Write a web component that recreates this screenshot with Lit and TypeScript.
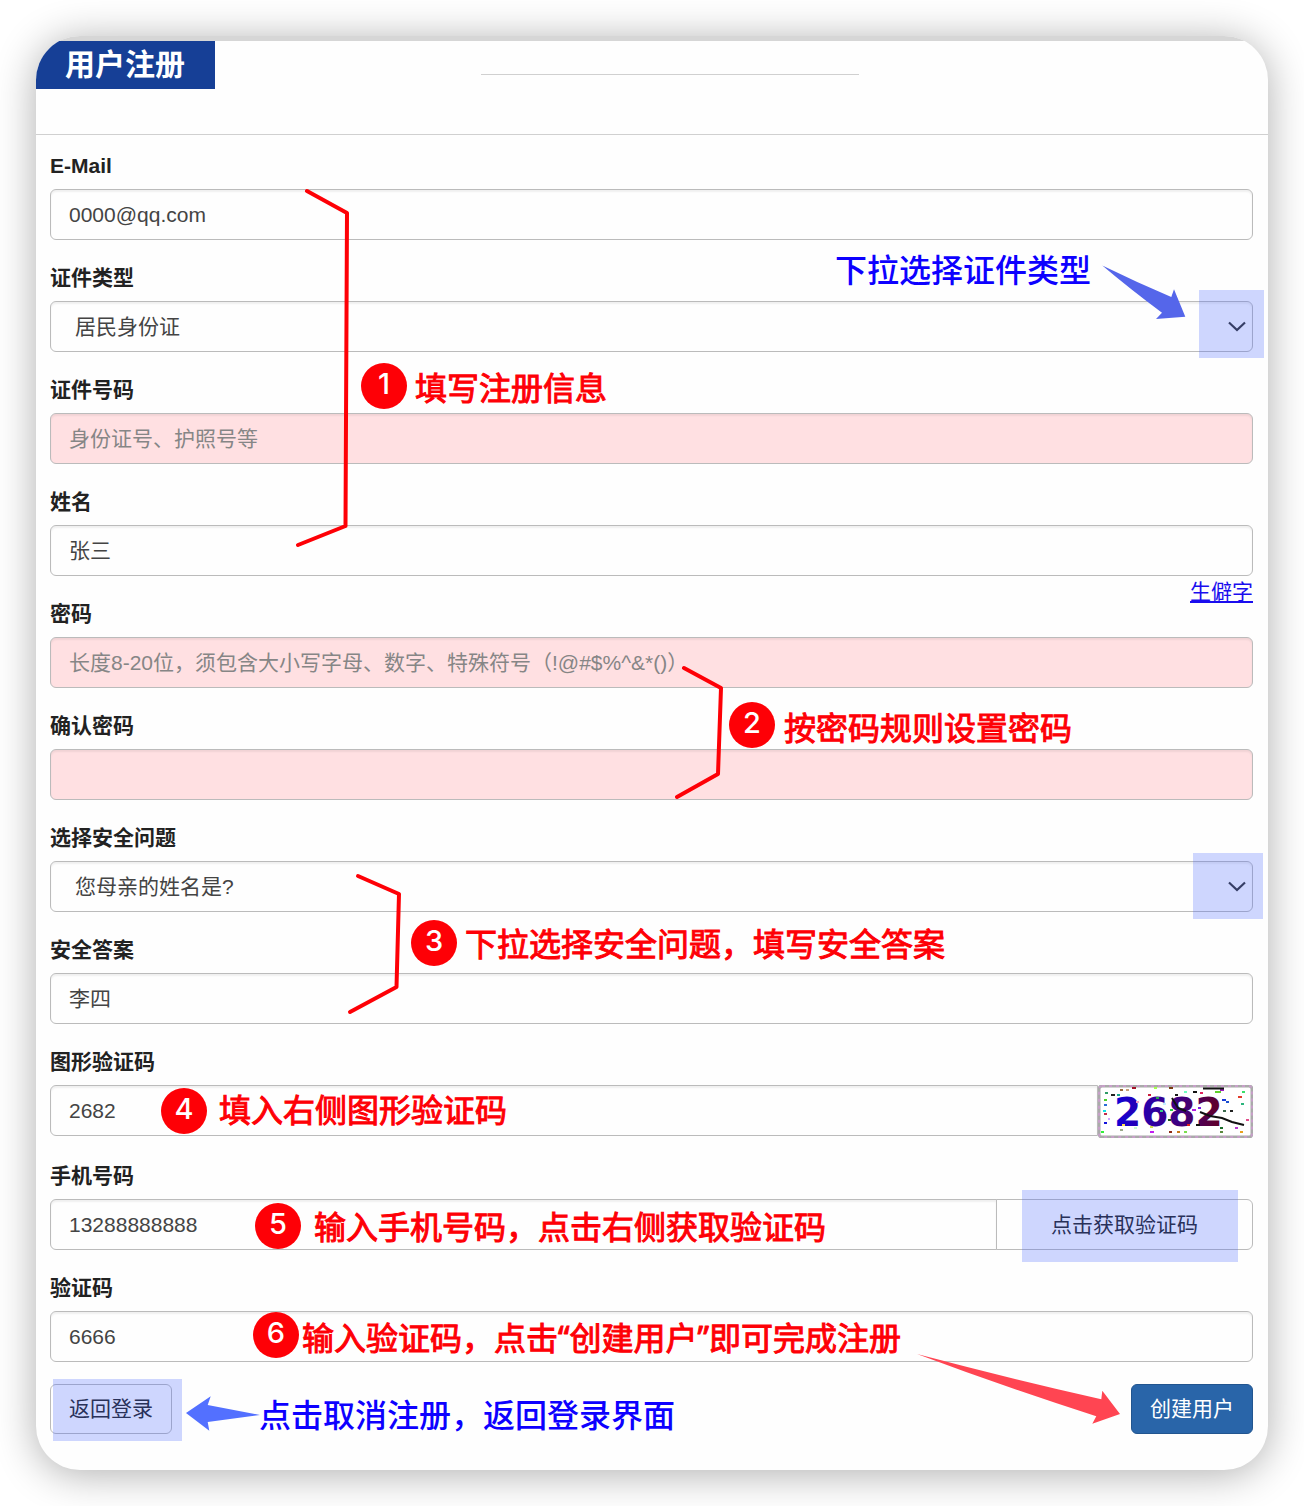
import { LitElement, html, css, svg, nothing } from "lit";
import { customElement } from "lit/decorators.js";

/** Coloured specks of the verification picture: x, y, width, colour. */
const SPECKS: [number, number, number, string][] = [
  [7, 7, 3, "#2f9c66"], [13, 9, 4, "#222"], [22, 4, 3, "#9a6a3c"], [28, 4, 3, "#c9a07c"],
  [34, 2, 4, "#a3122a"], [19, 9, 3, "#12a58b"], [56, 2, 3, "#a6ff4d"], [71, 2, 4, "#7a3a12"],
  [50, 9, 3, "#c81e3c"], [58, 12, 3, "#2aa84f"], [77, 9, 3, "#1a1a1a"], [86, 6, 3, "#6dffc0"],
  [95, 6, 4, "#111"], [102, 7, 3, "#e0245e"], [117, 6, 6, "#5fd02b"], [122, 4, 4, "#a020c0"],
  [144, 6, 3, "#38e06a"], [140, 11, 4, "#e23b2b"], [143, 18, 3, "#2bb57c"], [124, 14, 4, "#173bd6"],
  [128, 16, 3, "#1b4fd0"], [6, 14, 3, "#4dd02b"], [6, 19, 3, "#2b6cd6"], [5, 25, 3, "#19e0e6"],
  [6, 28, 3, "#c02a4a"], [6, 37, 3, "#1414dc"], [22, 44, 3, "#9aa98a"], [24, 39, 3, "#ffe14d"],
  [36, 42, 3, "#c4ffd0"], [52, 46, 4, "#c21ef0"], [52, 41, 3, "#d0e04d"], [71, 46, 3, "#8e2a12"],
  [79, 46, 3, "#c9791a"], [86, 46, 3, "#7ae04d"], [89, 39, 3, "#e0201e"], [98, 39, 4, "#111"],
  [122, 42, 3, "#1c6e2b"], [122, 46, 3, "#5a8a3c"], [137, 42, 3, "#b83ad0"], [142, 46, 3, "#e8a21e"],
  [132, 25, 3, "#222"], [125, 25, 3, "#3a6a4d"], [100, 22, 3, "#7a1ee0"], [94, 24, 4, "#b01ee0"],
  [3, 46, 3, "#32f03a"], [65, 18, 3, "#c4f0ff"], [62, 25, 3, "#35d08a"], [70, 34, 3, "#1c5a1c"],
  [38, 16, 3, "#f0a0c4"], [72, 24, 3, "#27d047"], [10, 33, 2, "#d0a0ff"], [148, 34, 3, "#e04d8a"],
];

@customElement("captcha-picture")
export class CaptchaPicture extends LitElement {
  static styles = css`
    :host { display: block; }
    svg { display: block; }
    .digits { font: 700 39px "DejaVu Sans", sans-serif; }
  `;

  render() {
    return html`
      <svg width="155" height="53" viewBox="0 0 155 53" role="img" aria-label="图形验证码">
        <defs>
          <linearGradient id="ink" x1="0" x2="1">
            <stop offset="0" stop-color="#1200d8" />
            <stop offset="0.3" stop-color="#2a00a8" />
            <stop offset="0.65" stop-color="#420078" />
            <stop offset="1" stop-color="#640020" />
          </linearGradient>
        </defs>
        <rect x="1" y="1" width="153" height="51" rx="3" fill="#fff" stroke="#aaaaaa" stroke-width="3" />
        <rect x="1" y="1" width="153" height="51" rx="3" fill="none" stroke="#c79fc9" stroke-width="2" stroke-dasharray="3 4" />
        <text class="digits" x="16" y="41" fill="url(#ink)">2682</text>
        ${SPECKS.map(([x, y, w, c]) => svg`<rect x=${x} y=${y} width=${w} height="2" fill=${c} />`)}
        <path d="M105 3.500H126" stroke="#111" stroke-width="2" fill="none" />
        <path d="M74 13l6 10 8 3M102 27l10 4 12 2 10 4 12 3" stroke="#111" stroke-width="2" fill="none" />
      </svg>
    `;
  }
}

const chevron = html`
  <svg class="chevron" width="18" height="12" viewBox="0 0 18 12" aria-hidden="true">
    <path d="M1 1.500L9 9L17 1.500" fill="none" stroke="#333" stroke-width="2.200" />
  </svg>
`;

@customElement("app-root")
export class AppRoot extends LitElement {
  static styles = css`
    :host {
      display: block;
      font-family: "Liberation Sans", "Noto Sans CJK SC", sans-serif;
      font-size: 21px;
      line-height: 30px;
      color: #222;
      background: #fff;
    }
    * { box-sizing: border-box; }
    .page { position: relative; padding: 36px; }
    .card {
      overflow: hidden;
      border-radius: 44px;
      background: #fefefe;
      box-shadow: 0 4px 42px rgba(0, 0, 0, 0.32);
    }
    .card::before { content: ""; display: block; height: 5px; background: #d6d6d6; }
    .header {
      display: grid;
      grid-template-columns: 445fr 378px 409fr;
      align-items: start;
      height: 94px;
      border-bottom: 1px solid #d0d0d0;
    }
    .title {
      justify-self: start;
      margin: 0;
      padding: 0 30px 0 29px;
      background: #163f96;
      color: #fff;
      font-size: 30px;
      font-weight: 700;
      line-height: 48px;
    }
    .rule { margin: 33px 0 0; border: 0; border-top: 1px solid #d0d0d0; }
    .form { display: grid; gap: 22px; padding: 15px 15px 36px 14px; }
    .field { display: grid; gap: 7px; }
    .label { justify-self: start; font-weight: 700; line-height: 32px; }
    .box {
      width: 100%;
      min-width: 0;
      height: 51px;
      margin: 0;
      padding: 0 18px;
      border: 1px solid #bbb;
      border-radius: 6px;
      background: #fefefe;
      box-shadow: inset 0 2px 2px rgba(0, 0, 0, 0.06);
      color: #444;
      font: inherit;
      appearance: none;
    }
    .box::placeholder { color: #868686; opacity: 1; }
    .missing { background: #ffe0e2; }
    .han { padding-bottom: 4px; font-family: "Noto Sans CJK SC", sans-serif; }
    .pick { display: grid; align-items: center; }
    .pick > * { grid-area: 1 / 1; }
    .choice { padding: 0 24px; }
    .chevron { justify-self: end; margin-right: 7px; pointer-events: none; }
    .with-link { margin-bottom: -7px; }
    .rare { justify-self: end; margin: -6px 0 -24px; color: #1a0dee; }
    .joined { display: flex; align-items: flex-start; }
    .joined .box { flex: 1; border-radius: 6px 0 0 6px; }
    .joined .button { flex: 0 0 257px; margin-left: -1px; border-radius: 0 6px 6px 0; height: 51px; }
    .button {
      height: 50px;
      padding: 0 18px;
      border: 1px solid #bbb;
      border-radius: 6px;
      background: #fefefe;
      color: #222;
      font: inherit;
    }
    .primary { border-color: #22558f; background: #2965a9; color: #fff; }
    .actions { display: flex; justify-content: space-between; }

    .notes { position: absolute; inset: 0; pointer-events: none; }
    .notes > * { position: absolute; }
    .lines { top: 0; left: 0; }
    .bracket { fill: none; stroke: #fe0006; stroke-width: 4; stroke-linecap: round; stroke-linejoin: round; }
    .shade { background: rgba(63, 95, 255, 0.25); }
    .note {
      display: flex;
      align-items: center;
      height: 44px;
      font-family: "Noto Sans", "Noto Sans CJK SC", sans-serif;
      font-size: 32px;
      font-weight: 400;
      color: #fe0006;
      white-space: nowrap;
      -webkit-text-stroke: 1px #fe0006;
    }
    .badge {
      width: 46px;
      height: 46px;
      border-radius: 50%;
      background: #fe0006;
      color: #fff;
      font: 500 29px/42px Inter, sans-serif;
      text-align: center;
    }
    .blue {
      height: 46px;
      font-family: "Liberation Sans", "Noto Sans CJK SC", sans-serif;
      font-weight: 500;
      color: #0d00ff;
      -webkit-text-stroke: 0;
    }
    .s1 { right: 40px; top: 290px; width: 65px; height: 68px; }
    .s2 { right: 41px; top: 853px; width: 70px; height: 66px; }
    .s3 { right: 66px; top: 1190px; width: 216px; height: 72px; }
    .s4 { left: 53px; top: 1379px; width: 129px; height: 62px; }
    .b1 { left: 361px; top: 363px; }
    .b2 { left: 729px; top: 702px; }
    .b3 { left: 411px; top: 920px; }
    .b4 { left: 161px; top: 1088px; }
    .b5 { left: 255px; top: 1203px; }
    .b6 { left: 253px; top: 1312px; }
    .n1 { left: 415px; top: 366px; }
    .n2 { left: 784px; top: 706px; }
    .n3 { left: 465px; top: 922px; }
    .n4 { left: 219px; top: 1088px; }
    .n5 { left: 314px; top: 1205px; }
    .n6 { left: 302px; top: 1316px; }
    .n7 { right: 213px; top: 248px; }
    .n8 { left: 259px; top: 1393px; }
    .a1 { right: 116px; top: 262px; }
    .a2 { left: 184px; top: 1394px; }
    .a3 { right: 182px; top: 1352px; }
  `;

  private text(id: string, label: string, value: string, type = "text", placeholder = "") {
    return html`
      <div class="field">
        <label class="label" for=${id}>${label}</label>
        <input class="box ${value ? "" : "missing"}" id=${id} type=${type} .value=${value}
          placeholder=${placeholder || nothing} />
      </div>
    `;
  }

  private choice(id: string, label: string, option: string) {
    return html`
      <div class="field">
        <label class="label" for=${id}>${label}</label>
        <div class="pick">
          <select class="box choice" id=${id}><option>${option}</option></select>
          ${chevron}
        </div>
      </div>
    `;
  }

  private notes() {
    return html`
      <div class="notes">
        <svg class="lines" width="760" height="1030" viewBox="0 0 760 1030" aria-hidden="true">
          <path class="bracket" d="M307 191L347 213L345.500 526L298 545" />
          <path class="bracket" d="M684 668L721 688L718 774L677 797" />
          <path class="bracket" d="M358 876L399 894L396.500 987L350 1012" />
        </svg>
        <div class="shade s1"></div>
        <div class="shade s2"></div>
        <div class="shade s3"></div>
        <div class="shade s4"></div>
        <svg class="a1" width="88" height="60" viewBox="1100 262 88 60" aria-hidden="true">
          <path fill="#5566ea" d="M1102.300 265.500Q1136 282 1171.300 297L1174 289.300L1185.300 316.700L1156 319L1162 312.700Q1130 289 1102.300 265.500Z" />
        </svg>
        <svg class="a2" width="78" height="40" viewBox="184 1394 78 40" aria-hidden="true">
          <path fill="#5370ff" d="M260 1415L207.700 1405L210.700 1396.300L186 1413L209.300 1430.700L207.700 1422Z" />
        </svg>
        <svg class="a3" width="207" height="74" viewBox="915 1352 207 74" aria-hidden="true">
          <path fill="#ff4552" d="M917 1354Q1008 1378 1101.300 1399.300L1102.300 1390.700L1120 1414L1092.300 1423.700L1096.300 1416.300Q1005 1387 917 1354Z" />
        </svg>
        <span class="badge b1">1</span><span class="note n1">填写注册信息</span>
        <span class="badge b2">2</span><span class="note n2">按密码规则设置密码</span>
        <span class="badge b3">3</span><span class="note n3">下拉选择安全问题，填写安全答案</span>
        <span class="badge b4">4</span><span class="note n4">填入右侧图形验证码</span>
        <span class="badge b5">5</span><span class="note n5">输入手机号码，点击右侧获取验证码</span>
        <span class="badge b6">6</span><span class="note n6">输入验证码，点击“创建用户”即可完成注册</span>
        <span class="note blue n7">下拉选择证件类型</span>
        <span class="note blue n8">点击取消注册，返回登录界面</span>
      </div>
    `;
  }

  render() {
    return html`
      <main class="page">
        <section class="card">
          <header class="header">
            <h1 class="title">用户注册</h1>
            <hr class="rule" />
          </header>
          <form class="form" @submit=${(e: Event) => e.preventDefault()}>
            ${this.text("email", "E-Mail", "0000@qq.com")}
            ${this.choice("id-type", "证件类型", "居民身份证")}
            ${this.text("id-number", "证件号码", "", "text", "身份证号、护照号等")}
            <div class="field with-link">
              <label class="label" for="name">姓名</label>
              <input class="box han" id="name" .value=${"张三"} />
              <a class="rare" href="#rare">生僻字</a>
            </div>
            ${this.text("password", "密码", "", "password", "长度8-20位，须包含大小写字母、数字、特殊符号（!@#$%^&*()）")}
            ${this.text("confirm", "确认密码", "", "password")}
            ${this.choice("question", "选择安全问题", "您母亲的姓名是?")}
            <div class="field">
              <label class="label" for="answer">安全答案</label>
              <input class="box han" id="answer" .value=${"李四"} />
            </div>
            <div class="field">
              <label class="label" for="captcha">图形验证码</label>
              <div class="joined">
                <input class="box" id="captcha" .value=${"2682"} />
                <captcha-picture></captcha-picture>
              </div>
            </div>
            <div class="field">
              <label class="label" for="phone">手机号码</label>
              <div class="joined">
                <input class="box" id="phone" type="tel" .value=${"13288888888"} />
                <button class="button" type="button">点击获取验证码</button>
              </div>
            </div>
            ${this.text("code", "验证码", "6666")}
            <div class="actions">
              <button class="button" type="button">返回登录</button>
              <button class="button primary" type="submit">创建用户</button>
            </div>
          </form>
        </section>
        ${this.notes()}
      </main>
    `;
  }
}
